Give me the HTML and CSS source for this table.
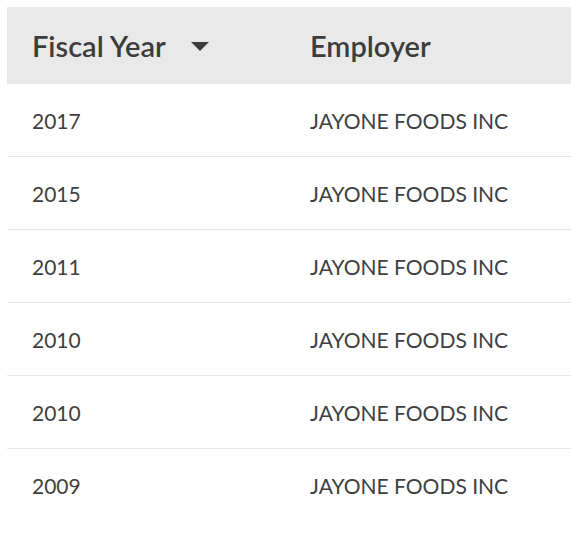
FILE: index.html
```html
<!DOCTYPE html>
<html>
<head>
<meta charset="utf-8">
<link rel="stylesheet" href="styles.css">
</head>
<body>
<table class="grid">
  <thead>
    <tr>
      <th class="col-year"><span class="th-label">Fiscal Year</span><span class="sort-caret"></span></th>
      <th class="col-emp"><span class="th-label">Employer</span></th>
    </tr>
  </thead>
  <tbody>
    <tr><td>2017</td><td>JAYONE FOODS INC</td></tr>
    <tr><td>2015</td><td>JAYONE FOODS INC</td></tr>
    <tr><td>2011</td><td>JAYONE FOODS INC</td></tr>
    <tr><td>2010</td><td>JAYONE FOODS INC</td></tr>
    <tr><td>2010</td><td>JAYONE FOODS INC</td></tr>
    <tr><td>2009</td><td>JAYONE FOODS INC</td></tr>
  </tbody>
</table>
</body>
</html>
```
FILE: styles.css
```css
html, body {
  margin: 0;
  padding: 0;
  background: #ffffff;
}
body {
  padding: 7px 0 0 7px;
  font-family: "Lato", "Noto Sans", sans-serif;
  color: #3f3f3f;
}
.grid {
  border-collapse: collapse;
  width: 564px;
}
.grid thead tr {
  background: #e9e9e9;
  height: 77px;
}
.grid th {
  text-align: left;
  font-size: 29px;
  font-weight: 600;
  padding: 0 0 5px 25px;
  color: #3c3c3c;
}
.col-year {
  width: 253px;
}
.th-label {
  display: inline-block;
  vertical-align: middle;
}
.sort-caret {
  display: inline-block;
  vertical-align: middle;
  margin-left: 25px;
  margin-top: 2px;
  width: 0;
  height: 0;
  border-left: 9px solid transparent;
  border-right: 9px solid transparent;
  border-top: 9px solid #3c3c3c;
}
.grid td {
  font-size: 21px;
  padding: 0 0 0 25px;
  height: 72px;
  border-bottom: 1px solid #e8e8e8;
}
.grid tbody tr:last-child td {
  border-bottom: none;
}
```
